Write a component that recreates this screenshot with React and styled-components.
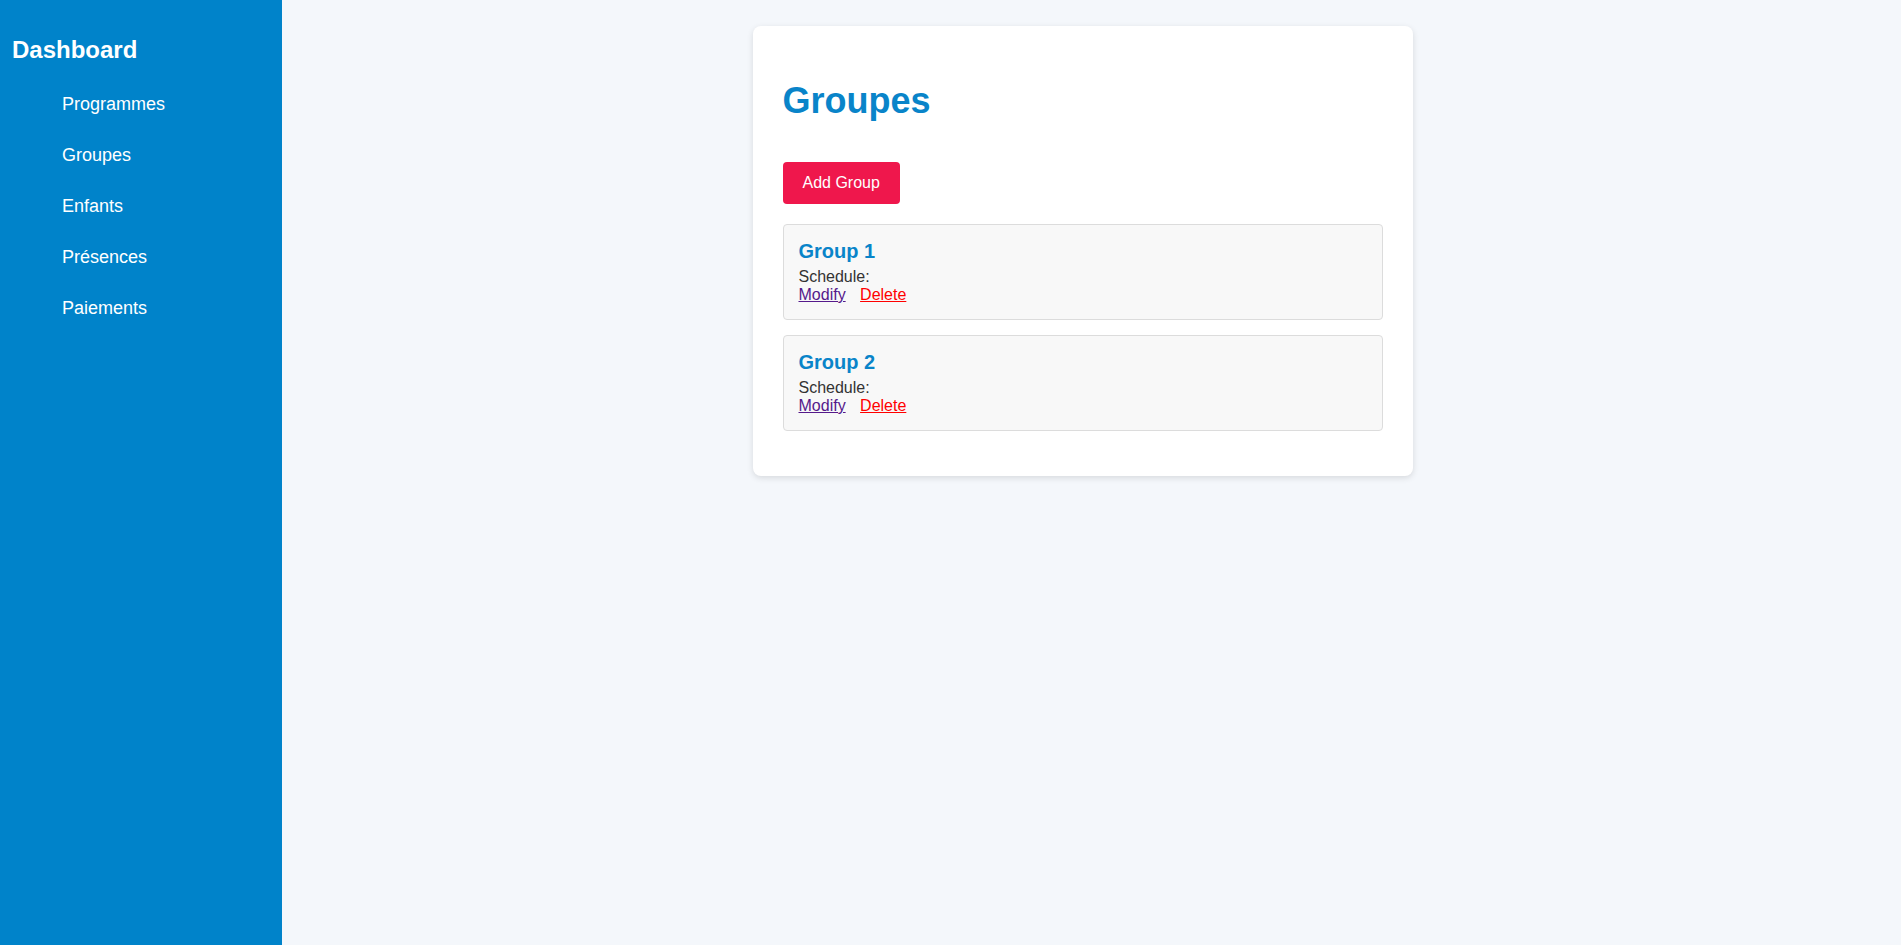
import React from 'react';
import styled, { createGlobalStyle } from 'styled-components';

const GlobalStyle = createGlobalStyle`
  html, body {
    margin: 0;
    padding: 0;
    height: 100%;
  }
  body {
    font-family: "Liberation Sans", Arial, sans-serif;
    background-color: #f4f7fb;
  }
  #root {
    min-height: 100%;
  }
`;

const Layout = styled.div`
  display: flex;
  min-height: 945px;
`;

const Sidebar = styled.aside`
  width: 282px;
  flex-shrink: 0;
  background-color: #0083ca;
  color: #fff;
  padding: 20px 0 0 12px;
  box-sizing: border-box;
`;

const SideTitle = styled.h2`
  margin: 16px 0 0 0;
  font-size: 24px;
  font-weight: bold;
`;

const NavList = styled.ul`
  list-style: none;
  margin: 15px 0 0 0;
  padding: 0 0 0 40px;
`;

const NavItem = styled.li`
  padding: 15px 10px;
  font-size: 18px;
  color: #fff;
  cursor: pointer;
`;

const Main = styled.main`
  flex: 1;
  padding: 26px 38px 26px 20px;
`;

const Panel = styled.section`
  width: 600px;
  margin: 0 auto;
  padding: 30px;
  background: #fff;
  border-radius: 8px;
  box-shadow: 0 2px 6px rgba(0, 0, 0, 0.12);
`;

const Title = styled.h1`
  margin: 24px 0 40px 0;
  font-size: 36px;
  font-weight: bold;
  color: #0984c9;
`;

const AddButton = styled.button`
  padding: 12px 20px;
  font-family: inherit;
  font-size: 16px;
  color: #fff;
  background-color: #ef174c;
  border: none;
  border-radius: 4px;
  cursor: pointer;
  margin-bottom: 20px;
`;

const GroupCard = styled.div`
  padding: 15px;
  margin-bottom: 15px;
  background: #f8f8f8;
  border: 1px solid #dcdcdc;
  border-radius: 4px;

  &:last-child {
    margin-bottom: 15px;
  }
`;

const GroupName = styled.h3`
  margin: 0 0 5px 0;
  font-size: 20px;
  font-weight: bold;
  color: #0984c9;
`;

const Schedule = styled.p`
  margin: 0;
  font-size: 16px;
  color: #333;
`;

const Actions = styled.div`
  font-size: 16px;
`;

const ActionLink = styled.a`
  margin-right: 10px;
  color: ${(p) => (p.$danger ? '#ff0000' : '#551a8b')};
  text-decoration: underline;
  cursor: pointer;
`;

const navItems = ['Programmes', 'Groupes', 'Enfants', 'Présences', 'Paiements'];

const groups = [
  { id: 1, name: 'Group 1', schedule: '' },
  { id: 2, name: 'Group 2', schedule: '' },
];

const App = () => {
  return (
    <>
      <GlobalStyle />
      <Layout>
        <Sidebar>
          <SideTitle>Dashboard</SideTitle>
          <NavList>
            {navItems.map((item) => (
              <NavItem key={item}>{item}</NavItem>
            ))}
          </NavList>
        </Sidebar>
        <Main>
          <Panel>
            <Title>Groupes</Title>
            <AddButton>Add Group</AddButton>
            <div>
              {groups.map((g) => (
                <GroupCard key={g.id}>
                  <GroupName>{g.name}</GroupName>
                  <Schedule>Schedule: {g.schedule}</Schedule>
                  <Actions>
                    <ActionLink>Modify</ActionLink>{' '}
                    <ActionLink $danger>Delete</ActionLink>
                  </Actions>
                </GroupCard>
              ))}
            </div>
          </Panel>
        </Main>
      </Layout>
    </>
  );
};

export default App;
